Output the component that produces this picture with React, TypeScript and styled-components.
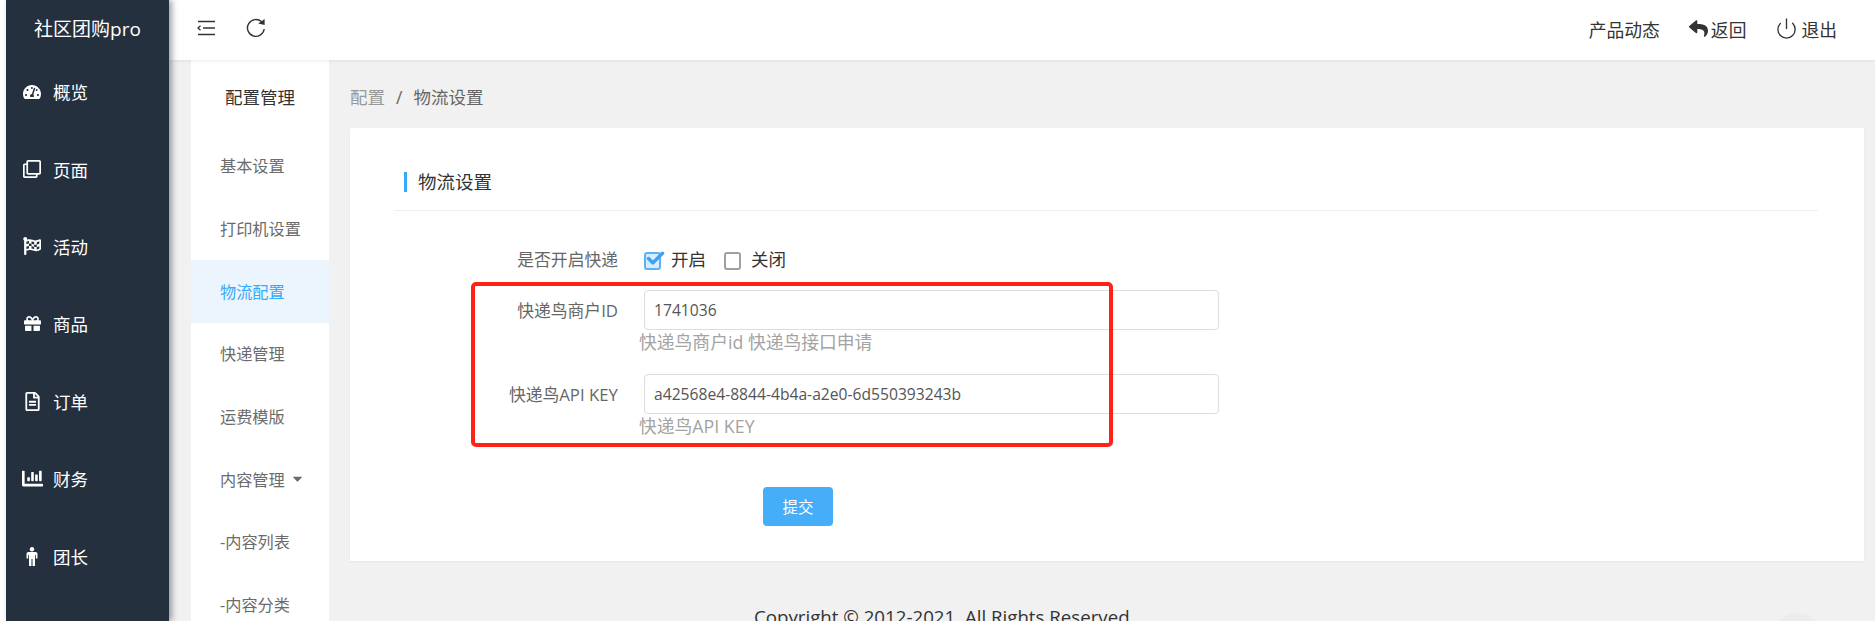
import React from 'react';
import styled, { createGlobalStyle } from 'styled-components';
import {
  FaCaretDown,
  FaChartBar,
  FaFlagCheckered,
  FaGift,
  FaRegClone,
  FaRegFileAlt,
  FaReply,
  FaTachometerAlt,
} from 'react-icons/fa';
import { Check, Power } from 'lucide-react';

const MaleIcon = () => (
  <svg width="12" height="19" viewBox="0 0 12 19" fill="currentColor">
    <circle cx="6" cy="2.2" r="2.2" />
    <path d="M2.5 5h7a2 2 0 0 1 2 2v4.5H9.8V8H9v11H6.5v-7h-1v7H3V8h-.8v3.5H.5V7a2 2 0 0 1 2-2z" />
  </svg>
);

const menuItems = [
  { label: '概览', icon: <FaTachometerAlt size={18} /> },
  { label: '页面', icon: <FaRegClone size={18} /> },
  { label: '活动', icon: <FaFlagCheckered size={18} /> },
  { label: '商品', icon: <FaGift size={17} /> },
  { label: '订单', icon: <FaRegFileAlt size={19} /> },
  { label: '财务', icon: <FaChartBar size={21} /> },
  { label: '团长', icon: <MaleIcon /> },
];

const subItems = ['基本设置', '打印机设置', '物流配置', '快递管理', '运费模版', '内容管理', '-内容列表', '-内容分类'];

const App = () => (
  <>
    <GlobalStyle />
    <Page>
      <Sidebar>
        <Logo>社区团购pro</Logo>
        {menuItems.map((item) => (
          <MenuItem key={item.label}>
            <MenuIcon>{item.icon}</MenuIcon>
            {item.label}
          </MenuItem>
        ))}
      </Sidebar>
      <Main>
        <Header>
          <HeaderLeft>
            <svg width="18" height="16" viewBox="0 0 18 16" fill="none" stroke="#333" strokeWidth="1.3">
              <path d="M1 1.5h17M6 8h12M1 14.5h17M3.5 5.7 1 8l2.5 2.3" />
            </svg>
            <svg width="20" height="20" viewBox="0 0 20 20" fill="none" stroke="#333" strokeWidth="1.4">
              <path d="M15.6 3.8A8.4 8.4 0 1 0 18.2 11" />
              <path d="M12.2 5.6 18.6 1v6z" fill="#333" stroke="none" />
            </svg>
          </HeaderLeft>
          <HeaderRight>
            <HeaderLink>产品动态</HeaderLink>
            <HeaderLink>
              <FaReply size={19} />
              返回
            </HeaderLink>
            <HeaderLink>
              <Power size={23} strokeWidth={1.4} />
              退出
            </HeaderLink>
          </HeaderRight>
        </Header>
        <Body>
          <SubNav>
            <SubTitle>配置管理</SubTitle>
            {subItems.map((name) => (
              <SubItem key={name} $active={name === '物流配置'}>
                {name}
                {name === '内容管理' && <FaCaretDown size={15} />}
              </SubItem>
            ))}
          </SubNav>
          <Content>
            <Breadcrumb>
              <CrumbRoot>配置</CrumbRoot>
              <CrumbSep>/</CrumbSep>
              物流设置
            </Breadcrumb>
            <Card>
              <CardTitle>
                <TitleText>物流设置</TitleText>
              </CardTitle>
              <Form>
                <Annotation />
                <RadioRow>
                  <Label>是否开启快递</Label>
                  <Options>
                    <Option>
                      <CheckBox $checked>
                        <CheckMark>
                          <Check size={21} strokeWidth={4} />
                        </CheckMark>
                      </CheckBox>
                      开启
                    </Option>
                    <Option>
                      <CheckBox />
                      关闭
                    </Option>
                  </Options>
                </RadioRow>
                <FieldRow>
                  <Label>快递鸟商户ID</Label>
                  <TextInput readOnly value="1741036" />
                  <Help>快递鸟商户id 快递鸟接口申请</Help>
                </FieldRow>
                <FieldRow>
                  <Label>快递鸟API KEY</Label>
                  <TextInput readOnly value="a42568e4-8844-4b4a-a2e0-6d550393243b" />
                  <Help>快递鸟API KEY</Help>
                </FieldRow>
                <Submit>提交</Submit>
              </Form>
            </Card>
            <Footer>Copyright © 2012-2021 &nbsp;All Rights Reserved</Footer>
          </Content>
        </Body>
        <ScrollTop />
      </Main>
    </Page>
  </>
);

export default App;

const GlobalStyle = createGlobalStyle`
  html, body {
    margin: 0;
    height: 100%;
    overflow: hidden;
    background: #fff;
  }
  body {
    font-family: "Open Sans", "Noto Sans CJK SC", sans-serif;
    color: #333;
  }
`;

const Page = styled.div`
  display: flex;
  height: 621px;
  padding-left: 6px;
  box-sizing: border-box;
  overflow: hidden;
`;

const Sidebar = styled.aside`
  position: relative;
  z-index: 2;
  flex: 0 0 163px;
  background: #25303e;
  color: #fff;
  box-shadow: 3px 0 6px rgba(37, 48, 62, 0.45);
`;

const Logo = styled.div`
  height: 53px;
  padding-top: 2px;
  box-sizing: border-box;
  display: flex;
  align-items: center;
  justify-content: center;
  font-size: 19px;
`;

const MenuItem = styled.div`
  height: 77.4px;
  display: flex;
  align-items: center;
  padding-left: 15px;
  font-size: 17.5px;
`;

const MenuIcon = styled.span`
  width: 32px;
  height: 22px;
  display: flex;
  align-items: center;
  justify-content: center;
  padding-right: 10px;
  box-sizing: border-box;
`;

const Main = styled.div`
  position: relative;
  flex: 1;
  min-width: 0;
  display: flex;
  flex-direction: column;
  background: #f1f1f1;
`;

const ScrollTop = styled.div`
  position: absolute;
  left: 1604px;
  top: 613px;
  width: 48px;
  height: 48px;
  border-radius: 50%;
  background: #ececec;
`;

const Header = styled.header`
  position: relative;
  z-index: 1;
  flex: 0 0 60px;
  display: flex;
  align-items: center;
  justify-content: space-between;
  background: #fff;
  box-shadow: 0 1px 3px rgba(0, 0, 0, 0.08);
`;

const HeaderLeft = styled.div`
  display: flex;
  align-items: center;
  gap: 31px;
  padding-left: 28px;
  margin-top: -4px;
`;

const HeaderRight = styled.div`
  display: flex;
  align-items: center;
  gap: 29px;
  padding-right: 38px;
  margin-top: -3px;
`;

const HeaderLink = styled.span`
  display: flex;
  align-items: center;
  gap: 3px;
  font-size: 17.8px;
  color: #333;
`;

const Body = styled.div`
  flex: 1;
  min-height: 0;
  display: flex;
`;

const SubNav = styled.nav`
  flex: 0 0 138px;
  margin-left: 22px;
  background: #fff;
`;

const SubTitle = styled.div`
  height: 75px;
  padding-bottom: 2px;
  box-sizing: border-box;
  display: flex;
  align-items: center;
  justify-content: center;
  font-size: 17.5px;
  color: #333;
`;

const SubItem = styled.div<{ $active?: boolean }>`
  height: 62.7px;
  padding: 0 0 2px 29px;
  box-sizing: border-box;
  display: flex;
  align-items: center;
  gap: 5px;
  font-size: 16.2px;
  color: ${(p) => (p.$active ? '#38a8f8' : '#6b6b6b')};
  background: ${(p) => (p.$active ? '#ecf5fd' : 'transparent')};
`;

const Content = styled.main`
  flex: 1;
  min-width: 0;
  padding: 0 11px 0 21px;
`;

const Breadcrumb = styled.div`
  height: 68px;
  padding-top: 5px;
  box-sizing: border-box;
  display: flex;
  align-items: center;
  font-size: 17.5px;
  color: #666;
`;

const CrumbRoot = styled.span`
  color: #999;
`;

const CrumbSep = styled.span`
  margin: 0 11px;
`;

const Card = styled.section`
  height: 433px;
  box-sizing: border-box;
  padding: 0 46px 0 44px;
  background: #fff;
  box-shadow: 0 1px 2px rgba(0, 0, 0, 0.05);
`;

const CardTitle = styled.div`
  padding: 44px 0 18px 10px;
  border-bottom: 1px solid #efefef;
`;

const TitleText = styled.div`
  height: 20px;
  box-sizing: border-box;
  display: flex;
  align-items: center;
  padding: 0 0 2px 11px;
  border-left: 3px solid #38a8f8;
  font-size: 18.5px;
  color: #333;
`;

const Form = styled.form`
  position: relative;
  padding-top: 33px;
`;

const Annotation = styled.div`
  position: absolute;
  left: 77px;
  top: 71px;
  width: 642px;
  height: 165px;
  box-sizing: border-box;
  border: 4px solid #ff2216;
  border-radius: 5px;
`;

const RadioRow = styled.div`
  display: grid;
  grid-template-columns: 224px 1fr;
  column-gap: 26px;
  align-items: center;
  height: 30px;
`;

const FieldRow = styled.div`
  display: grid;
  grid-template-columns: 224px 575px;
  column-gap: 26px;
  align-items: center;
  margin-top: 16px;

  & + & {
    margin-top: 20px;
  }
`;

const Label = styled.label`
  text-align: right;
  font-size: 16.8px;
  color: #666;
`;

const Options = styled.div`
  display: flex;
  gap: 18px;
`;

const Option = styled.span`
  display: flex;
  align-items: center;
  gap: 10px;
  font-size: 17.5px;
  line-height: 24px;
  color: #333;
`;

const CheckBox = styled.span<{ $checked?: boolean }>`
  position: relative;
  width: 17px;
  height: 18px;
  box-sizing: border-box;
  margin-top: 3px;
  border-radius: 3px;
  border: 2px solid ${(p) => (p.$checked ? '#5ab2f8' : '#a0a0a0')};
  background: ${(p) => (p.$checked ? '#d8ecfd' : '#fff')};
`;

const CheckMark = styled.span`
  position: absolute;
  left: -1px;
  top: -6px;
  display: flex;
  color: #3f9ff0;
`;

const TextInput = styled.input`
  height: 40px;
  box-sizing: border-box;
  padding: 0 9px;
  border: 1px solid #ddd;
  border-radius: 4px;
  outline: none;
  background: #fff;
  font-family: inherit;
  font-size: 15.65px;
  color: #555;
`;

const Help = styled.div`
  grid-column: 2;
  margin: 0 0 0 -5px;
  font-size: 17.8px;
  line-height: 24px;
  color: #a3a3a3;
`;

const Submit = styled.button`
  display: block;
  width: 70px;
  height: 39px;
  margin: 49px 0 0 369px;
  border: none;
  border-radius: 4px;
  background: #46adf8;
  font-family: inherit;
  font-size: 15.5px;
  color: #fff;
`;

const Footer = styled.footer`
  margin: 44px 0 0 404px;
  font-size: 18.7px;
  line-height: 24px;
  white-space: nowrap;
  color: #333;
`;
